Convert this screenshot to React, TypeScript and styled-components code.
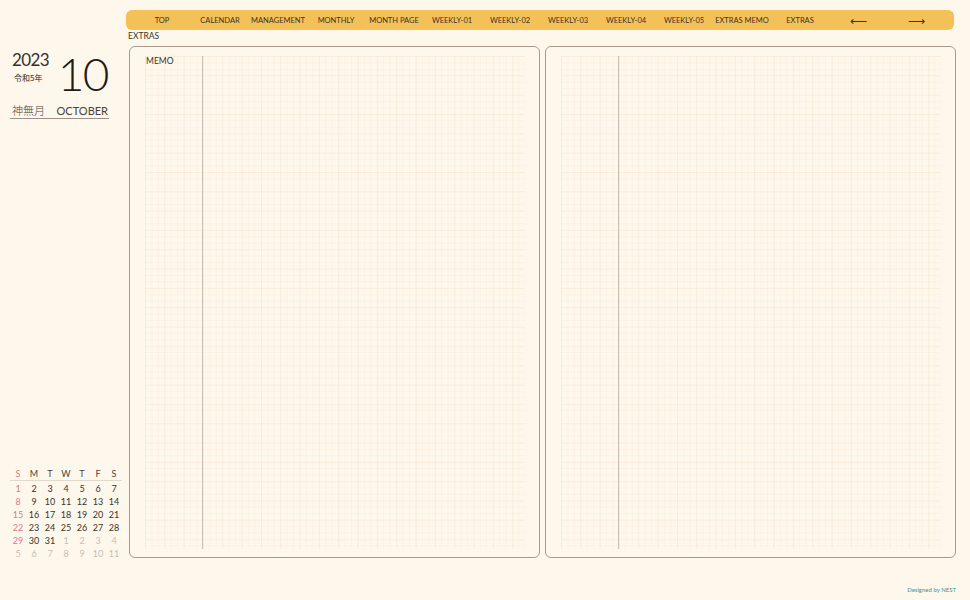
import React from "react";
import styled, { createGlobalStyle } from "styled-components";

const Global = createGlobalStyle`
  html, body {
    margin: 0;
    padding: 0;
    background: #fef7eb;
  }
  body {
    font-family: "Lato", "Liberation Sans", sans-serif;
    color: #2f2a26;
  }
`;

const Page = styled.div`
  width: 970px;
  height: 600px;
  display: flex;
  background: #fef7eb;
  overflow: hidden;
`;

const Side = styled.aside`
  width: 129px;
  padding: 50px 0 40px 10px;
  box-sizing: border-box;
  display: flex;
  flex-direction: column;
  justify-content: space-between;
`;

const DateHead = styled.div`
  width: 99px;
`;

const YearRow = styled.div`
  display: flex;
  justify-content: space-between;
  align-items: flex-start;
`;

const Year = styled.div`
  font-size: 17px;
  font-weight: 400;
  line-height: 20px;
  padding-left: 2px;
  letter-spacing: -0.6px;
  color: #35302b;
`;

const Era = styled.div`
  font-family: "Noto Sans CJK JP", sans-serif;
  font-size: 8px;
  line-height: 10px;
  margin-top: 3px;
  padding-left: 4px;
`;

const BigMonth = styled.div`
  font-size: 46px;
  font-weight: 300;
  line-height: 44px;
  margin-top: 2px;
  letter-spacing: -1.5px;
  padding-right: 1px;
  color: #1f1b18;
`;

const MonthName = styled.div`
  margin-top: 8px;
  display: flex;
  justify-content: space-between;
  align-items: flex-end;
  border-bottom: 1px solid #9a928a;
  padding: 0 1px 1px 2px;
  font-size: 11px;
  line-height: 13px;
  color: #4a433c;
`;

const Jp = styled.span`
  font-family: "Noto Sans CJK JP", sans-serif;
  font-weight: 300;
`;

const Cal = styled.div`
  width: 112px;
  display: grid;
  grid-template-columns: repeat(7, 16px);
  font-size: 9px;
`;

const Dow = styled.div<{ $sun?: boolean }>`
  height: 13px;
  line-height: 13px;
  text-align: center;
  color: ${(p) => (p.$sun ? "#d77b8c" : "#4a433c")};
  border-bottom: 1px solid #e2d9cc;
  margin-bottom: 1px;
`;

const Day = styled.div<{ $tone: "sun" | "norm" | "out" }>`
  height: 13px;
  line-height: 13px;
  text-align: center;
  color: ${(p) =>
    p.$tone === "sun" ? "#d77b8c" : p.$tone === "out" ? "#c8bfb6" : "#3a332d"};
`;

const Main = styled.main`
  flex: 1;
  display: flex;
  flex-direction: column;
  padding-top: 10px;
`;

const Nav = styled.nav`
  margin-left: -3px;
  width: 828px;
  height: 20px;
  background: #f4c158;
  border-radius: 6px;
  display: flex;
  padding-left: 7px;
  box-sizing: border-box;
`;

const NavItem = styled.div`
  width: 58px;
  flex: none;
  font-size: 7.5px;
  line-height: 21px;
  text-align: center;
  color: #3b3226;
  white-space: nowrap;
`;

const Arrow = styled(NavItem)`
  font-size: 12px;
  line-height: 22px;
`;

const Crumb = styled.div`
  font-size: 8.5px;
  line-height: 11px;
  margin: 1px 0 4px -1px;
  color: #3b3226;
`;

const Spread = styled.div`
  display: flex;
  gap: 5px;
  height: 512px;
`;

const Sheet = styled.section`
  width: 411px;
  box-sizing: border-box;
  border: 1.5px solid #a89a8a;
  border-radius: 6px;
  padding: 9px 14px 8px 15px;
  display: flex;
`;

const Grid = styled.div`
  position: relative;
  flex: 1;
  background-image:
    linear-gradient(to right, rgba(226, 196, 162, 0.13) 1px, transparent 1px),
    linear-gradient(to bottom, rgba(226, 196, 162, 0.13) 1px, transparent 1px),
    linear-gradient(to right, rgba(220, 190, 160, 0.08) 1px, transparent 1px),
    linear-gradient(to bottom, rgba(220, 190, 160, 0.08) 1px, transparent 1px);
  background-size: 19.35px 19.35px, 19.35px 19.35px, 6.45px 6.45px, 6.45px 6.45px;
`;

const Memo = styled.div`
  position: absolute;
  left: 1px;
  top: 0;
  font-size: 8.5px;
  color: #3b3226;
`;

const Divider = styled.div`
  position: absolute;
  left: 57px;
  top: 0;
  bottom: 0;
  width: 1px;
  background: #cbbfb2;
`;

const Footer = styled.div`
  text-align: right;
  font-size: 6px;
  color: #4a8f96;
  margin-top: 28px;
  padding-right: 14px;
`;

const navItems = [
  "TOP",
  "CALENDAR",
  "MANAGEMENT",
  "MONTHLY",
  "MONTH PAGE",
  "WEEKLY-01",
  "WEEKLY-02",
  "WEEKLY-03",
  "WEEKLY-04",
  "WEEKLY-05",
  "EXTRAS MEMO",
  "EXTRAS",
];

const dows = ["S", "M", "T", "W", "T", "F", "S"];

// october 2023 starts on sunday
const days: { n: number; out: boolean }[] = [];
for (let i = 1; i <= 31; i++) days.push({ n: i, out: false });
for (let i = 1; i <= 11; i++) days.push({ n: i, out: true });

export default function App() {
  return (
    <Page>
      <Global />
      <Side>
        <DateHead>
          <YearRow>
            <div>
              <Year>2023</Year>
              <Era>令和5年</Era>
            </div>
            <BigMonth>10</BigMonth>
          </YearRow>
          <MonthName>
            <Jp>神無月</Jp>
            <span>OCTOBER</span>
          </MonthName>
        </DateHead>
        <Cal>
          {dows.map((d, i) => (
            <Dow key={i} $sun={i === 0}>
              {d}
            </Dow>
          ))}
          {days.map((d, i) => (
            <Day
              key={i}
              $tone={d.out ? "out" : i % 7 === 0 ? "sun" : "norm"}
            >
              {d.n}
            </Day>
          ))}
        </Cal>
      </Side>
      <Main>
        <Nav>
          {navItems.map((n) => (
            <NavItem key={n}>{n}</NavItem>
          ))}
          <Arrow>⟵</Arrow>
          <Arrow>⟶</Arrow>
        </Nav>
        <Crumb>EXTRAS</Crumb>
        <Spread>
          <Sheet>
            <Grid>
              <Memo>MEMO</Memo>
              <Divider />
            </Grid>
          </Sheet>
          <Sheet>
            <Grid>
              <Divider />
            </Grid>
          </Sheet>
        </Spread>
        <Footer>Designed by NEST</Footer>
      </Main>
    </Page>
  );
}
